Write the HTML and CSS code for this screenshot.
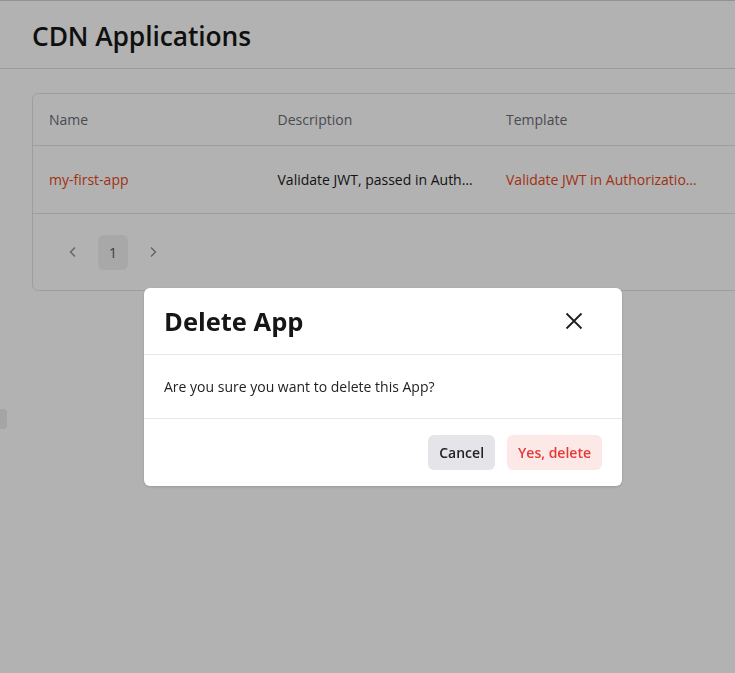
FILE: index.html
```html
<!DOCTYPE html>
<html>
<head>
<meta charset="utf-8">
<link rel="stylesheet" href="styles.css">
</head>
<body>
<div class="page">
  <header class="page-header">
    <h1 class="page-title">CDN Applications</h1>
  </header>
  <main class="content">
    <div class="card">
      <div class="row head">
        <div class="cell">Name</div>
        <div class="cell">Description</div>
        <div class="cell">Template</div>
      </div>
      <div class="row body-row">
        <div class="cell link">my-first-app</div>
        <div class="cell">Validate JWT, passed in Authorization header</div>
        <div class="cell link">Validate JWT in Authorization header</div>
      </div>
      <div class="pager">
        <span class="chev">
          <svg width="12" height="12" viewBox="0 0 12 12"><path d="M8 1.5 3.5 6 8 10.5" fill="none" stroke="#8a8a8a" stroke-width="1.3"/></svg>
        </span>
        <span class="page-btn">1</span>
        <span class="chev">
          <svg width="12" height="12" viewBox="0 0 12 12"><path d="M4 1.5 8.5 6 4 10.5" fill="none" stroke="#8a8a8a" stroke-width="1.3"/></svg>
        </span>
      </div>
    </div>
  </main>
  <div class="side-handle"></div>
</div>
<div class="overlay">
  <div class="modal">
    <div class="modal-head">
      <h2 class="modal-title">Delete App</h2>
      <span class="close">
        <svg width="18" height="18" viewBox="0 0 18 18"><path d="M1.5 1.5 16.5 16.5M16.5 1.5 1.5 16.5" fill="none" stroke="#1f1f1f" stroke-width="1.8"/></svg>
      </span>
    </div>
    <div class="modal-body">Are you sure you want to delete this App?</div>
    <div class="modal-foot">
      <button class="btn btn-cancel">Cancel</button>
      <button class="btn btn-danger">Yes, delete</button>
    </div>
  </div>
</div>
</body>
</html>
```
FILE: styles.css
```css
html, body {
  margin: 0;
  padding: 0;
  overflow: hidden;
  background: #ffffff;
}
body {
  font-family: "Open Sans", "Noto Sans", sans-serif;
  color: #1a1a1a;
  width: 735px;
  height: 673px;
}
.page {
  border-top: 1px solid #d2d2d2;
  height: 672px;
  position: relative;
}
.page-header {
  height: 67px;
  border-bottom: 1px solid #dcdcdc;
  display: flex;
  align-items: center;
  padding-left: 32px;
}
.page-title {
  margin: 0;
  font-size: 26.4px;
  font-weight: 600;
  color: #161616;
  letter-spacing: -0.1px;
  position: relative;
  top: 1px;
}
.content {
  padding: 24px 0 0 32px;
}
.card {
  width: 760px;
  border: 1px solid #e3e3e3;
  border-radius: 6px;
  background: #fff;
}
.row {
  display: flex;
  border-bottom: 1px solid #e3e3e3;
}
.cell {
  width: 198.5px;
  flex: none;
  padding: 0 14px 0 16px;
  white-space: nowrap;
  overflow: hidden;
  text-overflow: ellipsis;
  font-size: 14px;
}
.head {
  height: 51px;
  align-items: center;
}
.head .cell {
  color: #6b6b75;
}
.body-row {
  height: 67px;
  align-items: center;
}
.link {
  color: #e8461a;
}
.pager {
  height: 76px;
  display: flex;
  align-items: center;
  padding-left: 34px;
  gap: 13px;
}
.chev {
  width: 12px;
  height: 12px;
  display: flex;
}
.page-btn {
  width: 30px;
  height: 35px;
  border-radius: 6px;
  background: #f1f1f1;
  display: flex;
  align-items: center;
  justify-content: center;
  font-size: 14px;
  color: #555;
  margin: 0 6px;
}
.side-handle {
  position: absolute;
  left: 0;
  top: 408px;
  width: 7px;
  height: 20px;
  background: #ececec;
  border-radius: 0 4px 4px 0;
}
.overlay {
  position: fixed;
  inset: 0;
  background: rgba(0, 0, 0, 0.3);
}
.modal {
  position: absolute;
  left: 144px;
  top: 288px;
  width: 478px;
  background: #fff;
  border-radius: 6px;
  box-shadow: 0 1px 3px rgba(0, 0, 0, 0.15);
}
.modal-head {
  height: 66px;
  border-bottom: 1px solid #e6e6e6;
  display: flex;
  align-items: center;
  justify-content: space-between;
  padding: 0 39px 0 20px;
}
.modal-title {
  margin: 0;
  font-size: 25.5px;
  font-weight: 700;
  color: #161616;
}
.close {
  display: flex;
  width: 18px;
  height: 18px;
}
.modal-body {
  height: 63px;
  border-bottom: 1px solid #e6e6e6;
  display: flex;
  align-items: center;
  padding: 0 20px;
  font-size: 14px;
  color: #222;
}
.modal-foot {
  display: flex;
  justify-content: flex-end;
  gap: 12px;
  padding: 16px 20px;
}
.btn {
  font-family: inherit;
  font-size: 14px;
  font-weight: 600;
  height: 35px;
  border: none;
  border-radius: 6px;
  padding: 0 11px;
}
.btn-cancel {
  background: #e5e4e9;
  color: #222;
}
.btn-danger {
  background: #fde8e8;
  color: #e53935;
}
```
